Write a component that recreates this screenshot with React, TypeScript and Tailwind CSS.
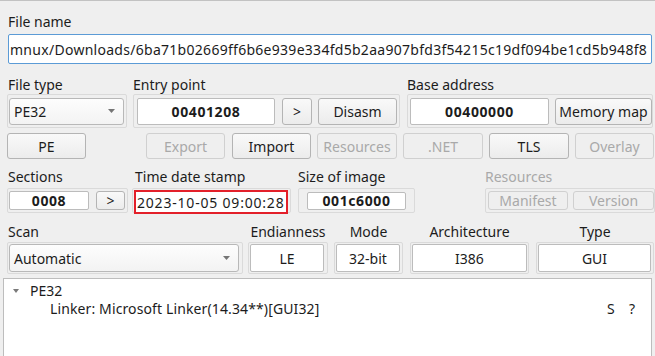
import React from "react";

const cx = (...a: (string | false | undefined)[]) => a.filter(Boolean).join(" ");

function Btn({
  children,
  className,
  disabled,
}: {
  children: React.ReactNode;
  className?: string;
  disabled?: boolean;
}) {
  return (
    <div
      className={cx(
        "flex shrink-0 items-center justify-center rounded-[3px] border whitespace-nowrap",
        disabled
          ? "border-[#d0d0d0] bg-[#efefef] text-[#a9a9a9]"
          : "border-[#b4b4b4] bg-linear-to-b from-[#f9f9f9] to-[#ececec] text-[#1c1c1c]",
        className
      )}
    >
      {children}
    </div>
  );
}

function Field({
  children,
  className,
  bold,
}: {
  children: React.ReactNode;
  className?: string;
  bold?: boolean;
}) {
  return (
    <div
      className={cx(
        "flex shrink-0 items-center justify-center rounded-[2px] border border-[#bcbcbc] bg-white text-[#1c1c1c] whitespace-nowrap overflow-hidden",
        bold && "font-bold tracking-[0.6px]",
        className
      )}
    >
      {children}
    </div>
  );
}

function Combo({ text, className, arrowLeft }: { text: string; className?: string; arrowLeft: string }) {
  return (
    <div
      className={cx(
        "relative flex shrink-0 items-center rounded-[3px] border border-[#b8b8b8] bg-linear-to-b from-[#fdfdfd] to-[#f3f3f3] pl-[4px] text-[#1c1c1c]",
        className
      )}
    >
      <span>{text}</span>
      <svg className={cx("absolute top-1/2 -translate-y-1/2", arrowLeft)} width="7" height="4" viewBox="0 0 7 4">
        <path d="M0 0 L7 0 L3.5 4 Z" fill="#757575" />
      </svg>
    </div>
  );
}

function Frame({ children, className }: { children: React.ReactNode; className?: string }) {
  return (
    <div className={cx("flex shrink-0 items-center rounded-[2px] border border-[#dadada]", className)}>{children}</div>
  );
}

const Label = ({ children, className }: { children: React.ReactNode; className?: string }) => (
  <div className={cx("h-[18px] shrink-0 leading-[18px] whitespace-nowrap", className)}>{children}</div>
);

export default function App() {
  return (
    <div
      className="h-[356px] w-[655px] overflow-hidden border-t border-[#c2c2c2] bg-[#efefef] text-[14px] text-[#1c1c1c]"
      style={{ fontFamily: '"Noto Sans", "Open Sans", sans-serif' }}
    >
      {/* Row 1 */}
      <div className="pt-[12px] pl-[8px]">
        <Label>File name</Label>
      </div>
      <div className="mt-[3px] ml-[8px] flex h-[30px] w-[644px] items-center justify-start overflow-hidden rounded-[2px] border border-[#5b9bd6] bg-white pl-[1px] whitespace-nowrap tracking-[0.28px]">
        <span>mnux/Downloads/6ba71b02669ff6b6e939e334fd5b2aa907bfd3f54215c19df094be1cd5b948f8</span>
      </div>

      {/* Row 2 */}
      <div className="mt-[12px] flex h-[52px] items-start">
        <div className="ml-[7px] flex w-[120px] shrink-0 flex-col">
          <Label className="pl-[1px]">File type</Label>
          <Frame className="h-[34px] pl-[1px]">
            <Combo text="PE32" className="h-[27px] w-[115px]" arrowLeft="left-[98px]" />
          </Frame>
        </div>
        <div className="ml-[6px] flex w-[267px] shrink-0 flex-col">
          <Label>Entry point</Label>
          <Frame className="h-[34px] pl-[3px]">
            <Field bold className="h-[27px] w-[138px]">00401208</Field>
            <Btn className="ml-[7px] h-[27px] w-[30px]">&gt;</Btn>
            <Btn className="ml-[6px] h-[27px] w-[79px]">Disasm</Btn>
          </Frame>
        </div>
        <div className="ml-[7px] flex w-[246px] shrink-0 flex-col">
          <Label>Base address</Label>
          <Frame className="h-[34px] pl-[2px]">
            <Field bold className="h-[27px] w-[139px]">00400000</Field>
            <Btn className="ml-[6px] h-[27px] w-[97px]">Memory map</Btn>
          </Frame>
        </div>
      </div>

      {/* Row 3 */}
      <div className="mt-[5px] flex h-[26px] items-center">
        <Btn className="ml-[7px] h-[26px] w-[79px]">PE</Btn>
        <Btn disabled className="ml-[60px] h-[26px] w-[79px]">Export</Btn>
        <Btn className="ml-[7px] h-[26px] w-[79px]">Import</Btn>
        <Btn disabled className="ml-[6px] h-[26px] w-[80px]">Resources</Btn>
        <Btn disabled className="ml-[6px] h-[26px] w-[80px]">.NET</Btn>
        <Btn className="ml-[6px] h-[26px] w-[80px]">TLS</Btn>
        <Btn disabled className="ml-[6px] h-[26px] w-[79px]">Overlay</Btn>
      </div>

      {/* Row 4 */}
      <div className="mt-[9px] flex h-[46px] items-start">
        <div className="ml-[7px] flex w-[121px] shrink-0 flex-col">
          <Label className="pl-[1px]">Sections</Label>
          <Frame className="mt-[2px] h-[25px] pl-[1px]">
            <Field bold className="h-[19px] w-[80px]">0008</Field>
            <Btn className="ml-[7px] h-[19px] w-[29px]">&gt;</Btn>
          </Frame>
        </div>
        <div className="ml-[4px] flex w-[159px] shrink-0 flex-col">
          <Label className="pl-[3px]">Time date stamp</Label>
          <div className="mt-[2px] h-[25px] rounded-[2px] border border-[#dadada]">
            <div className="mt-[1px] ml-[1px] flex h-[24px] w-[154px] items-center overflow-hidden border-2 border-[#e3202a] bg-white pl-[1px] whitespace-nowrap tracking-[0.8px]">
              2023-10-05 09:00:28
            </div>
          </div>
        </div>
        <div className="ml-[7px] flex w-[117px] shrink-0 flex-col">
          <Label>Size of image</Label>
          <Frame className="mt-[2px] h-[25px] justify-center">
            <Field bold className="h-[18px] w-[99px]">001c6000</Field>
          </Frame>
        </div>
        <div className="ml-[70px] flex w-[170px] shrink-0 flex-col">
          <Label className="text-[#a9a9a9]">Resources</Label>
          <Frame className="mt-[2px] h-[25px] pl-[2px]">
            <Btn disabled className="h-[19px] w-[80px]">Manifest</Btn>
            <Btn disabled className="ml-[5px] h-[19px] w-[81px]">Version</Btn>
          </Frame>
        </div>
      </div>

      {/* Row 5 */}
      <div className="mt-[9px] flex h-[51px] items-start">
        <div className="ml-[7px] flex w-[236px] shrink-0 flex-col">
          <Label className="pl-[1px]">Scan</Label>
          <Frame className="mt-[1px] h-[32px] pl-[1px]">
            <Combo text="Automatic" className="h-[28px] w-[230px]" arrowLeft="left-[213px]" />
          </Frame>
        </div>
        <div className="ml-[5px] flex w-[80px] shrink-0 flex-col items-center">
          <Label>Endianness</Label>
          <Frame className="mt-[1px] h-[32px] w-[80px] pl-[1px]">
            <Field className="h-[28px] w-[74px]">LE</Field>
          </Frame>
        </div>
        <div className="ml-[6px] flex w-[69px] shrink-0 flex-col items-center">
          <Label>Mode</Label>
          <Frame className="mt-[1px] h-[32px] w-[69px] pl-[1px]">
            <Field className="h-[28px] w-[64px]">32-bit</Field>
          </Frame>
        </div>
        <div className="ml-[7px] flex w-[119px] shrink-0 flex-col items-center">
          <Label>Architecture</Label>
          <Frame className="mt-[1px] h-[32px] w-[119px] pl-[1px]">
            <Field className="h-[28px] w-[115px]">I386</Field>
          </Frame>
        </div>
        <div className="ml-[7px] flex w-[118px] shrink-0 flex-col items-center">
          <Label>Type</Label>
          <Frame className="mt-[1px] h-[32px] w-[118px] pl-[1px]">
            <Field className="h-[28px] w-[113px]">GUI</Field>
          </Frame>
        </div>
      </div>

      {/* Tree */}
      <div className="mt-[4px] ml-[3px] h-[90px] w-[649px] border border-[#bdbdbd] bg-white pt-[3px]">
        <div className="flex h-[18px] items-center pl-[9px]">
          <svg width="6" height="4" viewBox="0 0 6 4">
            <path d="M0 0 L6 0 L3 4 Z" fill="#7a7a7a" />
          </svg>
          <span className="ml-[11px] leading-[18px]">PE32</span>
        </div>
        <div className="flex h-[18px] items-center leading-[18px] whitespace-nowrap">
          <div className="w-[603px] pl-[46px] tracking-[0.12px]">Linker: Microsoft Linker(14.34**)[GUI32]</div>
          <div className="w-[22px]">S</div>
          <div>?</div>
        </div>
      </div>
    </div>
  );
}
